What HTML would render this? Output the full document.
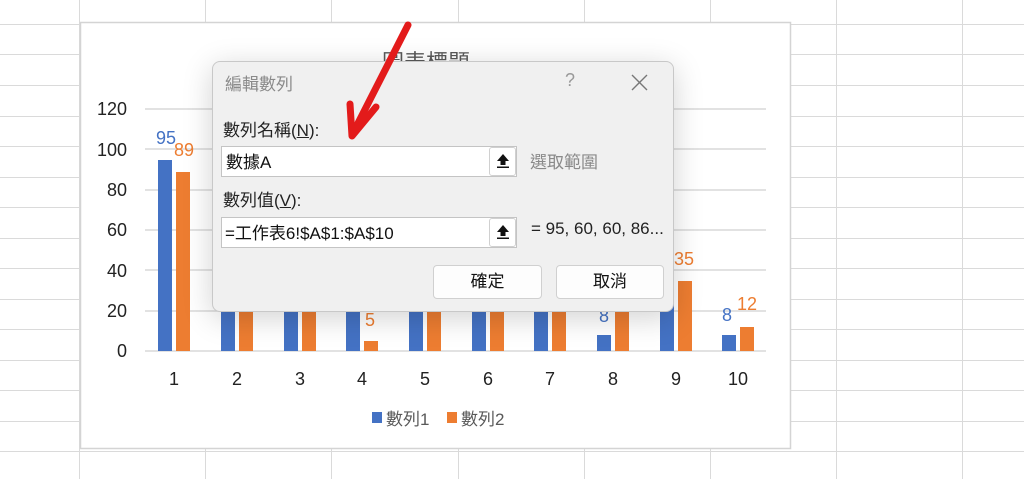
<!DOCTYPE html>
<html><head><meta charset="utf-8"><style>
*{margin:0;padding:0;box-sizing:border-box}
body{width:1024px;height:479px;overflow:hidden;background:#fff;position:relative;font-family:"Liberation Sans","Noto Sans CJK TC",sans-serif}
.a{position:absolute}
.t{position:absolute;white-space:nowrap}
</style></head><body>
<svg class="a" style="left:0;top:0" width="1024" height="479">
<g stroke="#dadada" stroke-width="1">
<line x1="0" y1="24.5" x2="1024" y2="24.5"/><line x1="0" y1="54.5" x2="1024" y2="54.5"/><line x1="0" y1="85.5" x2="1024" y2="85.5"/><line x1="0" y1="116.5" x2="1024" y2="116.5"/><line x1="0" y1="146.5" x2="1024" y2="146.5"/><line x1="0" y1="177.5" x2="1024" y2="177.5"/><line x1="0" y1="207.5" x2="1024" y2="207.5"/><line x1="0" y1="238.5" x2="1024" y2="238.5"/><line x1="0" y1="268.5" x2="1024" y2="268.5"/><line x1="0" y1="299.5" x2="1024" y2="299.5"/><line x1="0" y1="329.5" x2="1024" y2="329.5"/><line x1="0" y1="360.5" x2="1024" y2="360.5"/><line x1="0" y1="390.5" x2="1024" y2="390.5"/><line x1="0" y1="421.5" x2="1024" y2="421.5"/><line x1="0" y1="451.5" x2="1024" y2="451.5"/>
<line x1="79.5" y1="0" x2="79.5" y2="479"/><line x1="205.5" y1="0" x2="205.5" y2="479"/><line x1="331.5" y1="0" x2="331.5" y2="479"/><line x1="458.5" y1="0" x2="458.5" y2="479"/><line x1="584.5" y1="0" x2="584.5" y2="479"/><line x1="710.5" y1="0" x2="710.5" y2="479"/><line x1="836.5" y1="0" x2="836.5" y2="479"/><line x1="962.5" y1="0" x2="962.5" y2="479"/>
</g>
<rect x="80.5" y="22.5" width="710" height="426" fill="#fff" stroke="#d4d4d4" stroke-width="1.5"/>
<g stroke="#d9d9d9" stroke-width="1.5">
<line x1="145" y1="109" x2="766" y2="109"/><line x1="145" y1="149" x2="766" y2="149"/><line x1="145" y1="190" x2="766" y2="190"/><line x1="145" y1="230" x2="766" y2="230"/><line x1="145" y1="270" x2="766" y2="270"/><line x1="145" y1="311" x2="766" y2="311"/><line x1="145" y1="351" x2="766" y2="351"/>
</g>
<g font-family="Liberation Sans,sans-serif" font-size="18" fill="#222" text-anchor="end">
<text x="127" y="115">120</text><text x="127" y="156">100</text><text x="127" y="196">80</text><text x="127" y="236">60</text><text x="127" y="277">40</text><text x="127" y="317">20</text><text x="127" y="357">0</text>
</g>
<g fill="#4472c4">
<rect x="158" y="160" width="14" height="191"/><rect x="221" y="220" width="14" height="131"/><rect x="284" y="220" width="14" height="131"/><rect x="346" y="200" width="14" height="151"/><rect x="409" y="220" width="14" height="131"/><rect x="472" y="220" width="14" height="131"/><rect x="534" y="220" width="14" height="131"/><rect x="597" y="335" width="14" height="16"/><rect x="660" y="230" width="14" height="121"/><rect x="722" y="335" width="14" height="16"/>
</g>
<g fill="#ed7d31">
<rect x="176" y="172" width="14" height="179"/><rect x="239" y="220" width="14" height="131"/><rect x="302" y="220" width="14" height="131"/><rect x="364" y="341" width="14" height="10"/><rect x="427" y="220" width="14" height="131"/><rect x="490" y="220" width="14" height="131"/><rect x="552" y="220" width="14" height="131"/><rect x="615" y="220" width="14" height="131"/><rect x="678" y="281" width="14" height="70"/><rect x="740" y="327" width="14" height="24"/>
</g>
<g font-family="Liberation Sans,sans-serif" font-size="18">
<text x="156" y="144" fill="#4472c4">95</text><text x="174" y="156" fill="#ed7d31">89</text>
<text x="365" y="326" fill="#ed7d31">5</text>
<text x="599" y="322" fill="#4472c4">8</text>
<text x="674" y="265" fill="#ed7d31">35</text>
<text x="722" y="321" fill="#4472c4">8</text><text x="737" y="310" fill="#ed7d31">12</text>
</g>
<g font-family="Liberation Sans,sans-serif" font-size="18" fill="#222" text-anchor="middle">
<text x="174" y="385">1</text><text x="237" y="385">2</text><text x="300" y="385">3</text><text x="362" y="385">4</text><text x="425" y="385">5</text><text x="488" y="385">6</text><text x="550" y="385">7</text><text x="613" y="385">8</text><text x="676" y="385">9</text><text x="738" y="385">10</text>
</g>
<rect x="372" y="412" width="10" height="11" fill="#4472c4"/>
<rect x="447" y="412" width="10" height="11" fill="#ed7d31"/>
<text x="386" y="425" font-size="17" fill="#595959" font-family="Liberation Sans,Noto Sans CJK TC,sans-serif">數列1</text>
<text x="461" y="425" font-size="17" fill="#595959" font-family="Liberation Sans,Noto Sans CJK TC,sans-serif">數列2</text>
<text x="382" y="70" font-size="22" fill="#595959" font-family="Liberation Sans,Noto Sans CJK TC,sans-serif">圖表標題</text>
</svg>

<div class="a" style="left:212px;top:61px;width:462px;height:251px;background:#f0f0f0;border:1px solid #c8c8c8;border-radius:8px;box-shadow:0 6px 30px rgba(0,0,0,0.18)">
<div class="t" style="left:12px;top:8px;font-size:17px;color:#8a8a8a">編輯數列</div>
<div class="t" style="left:352px;top:8px;font-size:18px;color:#999">?</div>
<svg class="a" style="left:418px;top:12px" width="17" height="17"><path d="M1 1L16 16M16 1L1 16" stroke="#777" stroke-width="1.4"/></svg>
<div class="t" style="left:10px;top:54px;font-size:17px;color:#222">數列名稱(<u>N</u>):</div>
<div class="a" style="left:8px;top:84px;width:296px;height:31px;background:#fff;border:1px solid #c4c4c4"></div>
<div class="t" style="left:13px;top:86px;font-size:17px;color:#111">數據A</div>
<div class="a" style="left:276px;top:85px;width:27px;height:29px;background:#fff;border:1px solid #d0d0d0;border-radius:3px"></div>
<svg class="a" style="left:283px;top:91px" width="14" height="16"><path d="M7 1L1 8H4.5V12H9.5V8H13Z" fill="#111"/><rect x="1" y="13.5" width="12" height="1.5" fill="#111"/></svg>
<div class="t" style="left:317px;top:86px;font-size:17px;color:#8a8a8a">選取範圍</div>
<div class="t" style="left:10px;top:124px;font-size:17px;color:#222">數列值(<u>V</u>):</div>
<div class="a" style="left:8px;top:155px;width:296px;height:31px;background:#fff;border:1px solid #c4c4c4"></div>
<div class="t" style="left:12px;top:157px;font-size:17px;color:#111">=工作表6!$A$1:$A$10</div>
<div class="a" style="left:276px;top:156px;width:27px;height:29px;background:#fff;border:1px solid #d0d0d0;border-radius:3px"></div>
<svg class="a" style="left:283px;top:162px" width="14" height="16"><path d="M7 1L1 8H4.5V12H9.5V8H13Z" fill="#111"/><rect x="1" y="13.5" width="12" height="1.5" fill="#111"/></svg>
<div class="t" style="left:318px;top:157px;font-size:17px;color:#222">= 95, 60, 60, 86...</div>
<div class="a" style="left:220px;top:203px;width:109px;height:34px;background:#fdfdfd;border:1px solid #d0d0d0;border-radius:4px;text-align:center;line-height:32px;font-size:17px;color:#111">確定</div>
<div class="a" style="left:343px;top:203px;width:108px;height:34px;background:#fdfdfd;border:1px solid #d0d0d0;border-radius:4px;text-align:center;line-height:32px;font-size:17px;color:#111">取消</div>
</div>

<svg class="a" style="left:0;top:0" width="1024" height="479">
<g stroke="#e31b1b" stroke-width="7" stroke-linecap="round" stroke-linejoin="round" fill="none">
<path d="M408 25L352 135"/><path d="M350 104L352 136L376 107"/>
</g>
</svg>
</body></html>
